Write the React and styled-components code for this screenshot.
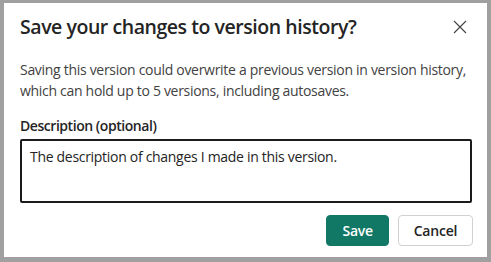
import React, { useState } from "react";
import styled, { createGlobalStyle } from "styled-components";

const GlobalStyle = createGlobalStyle`
  html, body {
    margin: 0;
    padding: 0;
    background: #a0a0a0;
  }
  body {
    font-family: "Open Sans", "Noto Sans", sans-serif;
  }
`;

function CloseGlyph() {
  return (
    <svg width="14" height="14" viewBox="0 0 14 14" fill="none">
      <path d="M1 1L13 13M13 1L1 13" stroke="#424242" strokeWidth="1.1" />
    </svg>
  );
}

function App() {
  const [text, setText] = useState(
    "The description of changes I made in this version."
  );

  return (
    <>
      <GlobalStyle />
      <Frame>
        <Dialog>
          <Header>
            <Title>Save your changes to version history?</Title>
            <CloseButton aria-label="Close">
              <CloseGlyph />
            </CloseButton>
          </Header>
          <Body>
            Saving this version could overwrite a previous version in version
            history, which can hold up to 5 versions, including autosaves.
          </Body>
          <Field>
            <Label>Description (optional)</Label>
            <TextArea value={text} onChange={(e) => setText(e.target.value)} />
          </Field>
          <Actions>
            <Button primary>Save</Button>
            <Button>Cancel</Button>
          </Actions>
        </Dialog>
      </Frame>
    </>
  );
}

export default App;

const Frame = styled.div`
  width: 491px;
  height: 262px;
  padding: 3px 4px 5px 4px;
  box-sizing: border-box;
`;

const Dialog = styled.div`
  background: #ffffff;
  height: 100%;
  box-sizing: border-box;
  padding: 10px 15px 10px 16px;
  display: flex;
  flex-direction: column;
`;

const Header = styled.div`
  display: flex;
  align-items: center;
  justify-content: space-between;
`;

const Title = styled.h2`
  margin: 0;
  font-size: 19.5px;
  line-height: 28px;
  font-weight: 600;
  letter-spacing: -0.45px;
  color: #242424;
`;

const CloseButton = styled.button`
  border: none;
  background: none;
  padding: 0;
  margin-right: 5px;
  width: 14px;
  height: 14px;
  display: flex;
  cursor: pointer;
`;

const Body = styled.p`
  margin: 18px 0 0 0;
  font-size: 14px;
  line-height: 21px;
  letter-spacing: -0.3px;
  color: #424242;
`;

const Field = styled.div`
  display: flex;
  flex-direction: column;
  margin-top: 15px;
`;

const Label = styled.label`
  font-size: 14px;
  line-height: 20px;
  font-weight: 600;
  letter-spacing: -0.45px;
  color: #242424;
  margin-bottom: 3px;
`;

const TextArea = styled.textarea`
  height: 64px;
  box-sizing: border-box;
  border: 2px solid #1b1b1b;
  border-radius: 2px;
  padding: 6px 8px;
  font-family: inherit;
  font-size: 14px;
  line-height: 20px;
  letter-spacing: -0.3px;
  color: #242424;
  resize: none;
  outline: none;
`;

const Actions = styled.div`
  display: flex;
  justify-content: flex-end;
  gap: 9px;
  margin-top: 12px;
  margin-right: -1px;
`;

const Button = styled.button`
  height: 31px;
  box-sizing: border-box;
  padding: 0 ${(p) => (p.primary ? "15px" : "14px")};
  min-width: ${(p) => (p.primary ? "61px" : "75px")};
  border-radius: 4px;
  border: 1px solid ${(p) => (p.primary ? "#117865" : "#d1d1d1")};
  background: ${(p) => (p.primary ? "#117865" : "#ffffff")};
  color: ${(p) => (p.primary ? "#ffffff" : "#242424")};
  font-family: inherit;
  font-size: 14px;
  font-weight: 600;
  letter-spacing: -0.2px;
  cursor: pointer;
`;
